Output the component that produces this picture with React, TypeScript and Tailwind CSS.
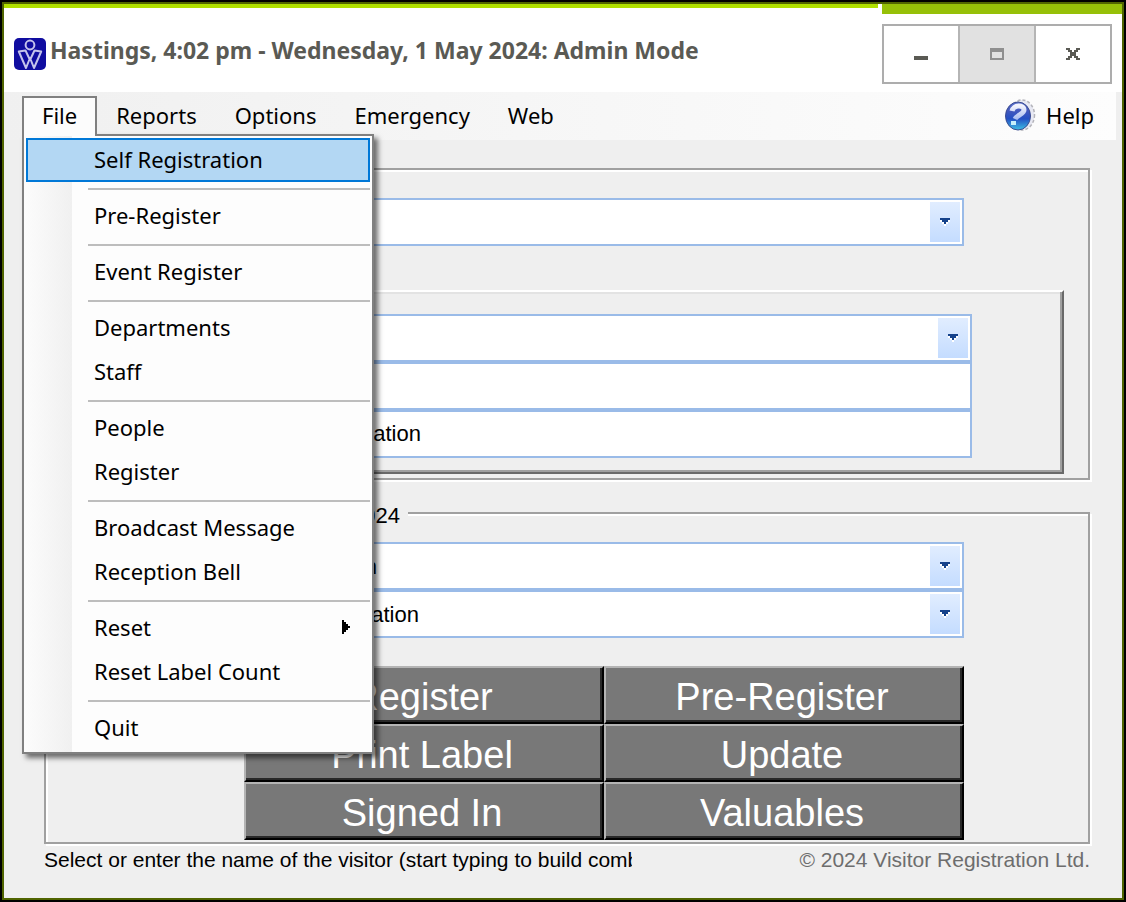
import { useState } from "react";

const MENUS = ["File", "Reports", "Options", "Emergency", "Web"];

const FILE_MENU = [
  ["Self Registration"],
  ["Pre-Register"],
  ["Event Register"],
  ["Departments", "Staff"],
  ["People", "Register"],
  ["Broadcast Message", "Reception Bell"],
  ["Reset", "Reset Label Count"],
  ["Quit"],
];

const ACTIONS = ["Register", "Pre-Register", "Print Label", "Update", "Signed In", "Valuables"];

function AppIcon() {
  return (
    <svg width="32" height="32" viewBox="0 0 32 32" className="shrink-0" aria-hidden="true">
      <rect width="32" height="32" rx="5" fill="#100da0" />
      <g fill="none" stroke="#c4c3ec" strokeWidth="2" strokeLinejoin="round">
        <circle cx="16" cy="7" r="4.4" />
        <path d="M11.5 12.5 4.8 13.5 12 30 16 20l4 10 7.2-16.5-6.7-1L16 22z" />
      </g>
    </svg>
  );
}

function HelpIcon() {
  return (
    <svg width="32" height="32" viewBox="0 0 32 32" className="shrink-0" aria-hidden="true">
      <defs>
        <linearGradient id="ball" x1="0" y1="0" x2="0" y2="1">
          <stop offset="0%" stopColor="#5d74cf" />
          <stop offset="30%" stopColor="#4459bd" />
          <stop offset="60%" stopColor="#2450c4" />
          <stop offset="100%" stopColor="#3cc0e4" />
        </linearGradient>
        <linearGradient id="mark" x1="0" y1="0" x2="0" y2="1">
          <stop offset="0%" stopColor="#f2f3fd" />
          <stop offset="100%" stopColor="#a9bdf0" />
        </linearGradient>
      </defs>
      <ellipse cx="18" cy="16" rx="12.5" ry="15" fill="#e8e9f3" stroke="#b4b4ba" strokeWidth="1.5" strokeDasharray="3 2" />
      <ellipse cx="14" cy="17" rx="12.5" ry="14" fill="url(#ball)" stroke="#3c4c90" />
      <path d="M8 12c1-6 12-7 12-1 0 4-7 5-9 9" fill="none" stroke="url(#mark)" strokeWidth="5" />
      <rect x="7" y="22" width="5" height="4" fill="#c5f0fb" />
    </svg>
  );
}

function Caret() {
  return (
    <svg width="10" height="8" viewBox="0 0 10 8" shapeRendering="crispEdges" aria-hidden="true">
      <path d="M0 2h10v2H8v2H6v2H4V6H2V4H0z" fill="#fff" />
      <path d="M0 0h10v2H8v2H6v2H4V4H2V2H0z" fill="#15428b" />
    </svg>
  );
}

function Combo({ label, value = "" }: { label: string; value?: string }) {
  return (
    <div className="flex h-12 border-2 border-[#9abbe8] bg-white p-0.5">
      <input
        aria-label={label}
        defaultValue={value}
        className="min-w-0 flex-1 bg-transparent pl-3 text-[22px] outline-none"
      />
      <button aria-label={`Open ${label}`} className="flex w-[30px] items-center justify-center bg-linear-to-b from-[#e1edff] to-[#c4dcff]">
        <Caret />
      </button>
    </div>
  );
}

function TextBox({ label, value = "" }: { label: string; value?: string }) {
  return (
    <input
      aria-label={label}
      defaultValue={value}
      className="block h-12 w-full border-2 border-[#9abbe8] bg-white px-3.5 text-[22px] outline-none"
    />
  );
}

function FileMenu() {
  return (
    <div
      role="menu"
      className="absolute top-[42px] left-[18px] z-10 w-[352px] border-2 border-[#808080] bg-[#fdfdfd] bg-linear-to-r from-[#fcfcfc] to-[#f0f0f0] bg-[length:48px_100%] bg-no-repeat p-0.5 shadow-[4px_4px_5px_rgba(0,0,0,0.55)]"
    >
      {FILE_MENU.map((group, i) => (
        <div key={group[0]} role="group">
          {i > 0 && <div className="mt-1.5 mb-1 ml-[62px] h-0.5 bg-[#bdbdbd]" />}
          {group.map((item) => (
            <button
              key={item}
              role="menuitem"
              className={
                item === "Self Registration"
                  ? "flex h-11 w-full items-center justify-between border-2 border-[#0078d7] bg-[#b3d7f3] pr-[18px] pb-0.5 pl-[66px]"
                  : "flex h-11 w-full items-center justify-between border-2 border-transparent pr-[18px] pb-0.5 pl-[66px]"
              }
            >
              {item}
              {item === "Reset" && (
                <svg width="8" height="14" viewBox="0 0 8 14" shapeRendering="crispEdges" aria-hidden="true">
                  <path d="M0 0h2v2h2v2h2v2h2v2H6v2H4v2H2v2H0z" />
                </svg>
              )}
            </button>
          ))}
        </div>
      ))}
    </div>
  );
}

export default function App() {
  const [open, setOpen] = useState(true);

  return (
    <div className="flex min-h-screen flex-col border-2 border-black bg-[#efefef] font-['Liberation_Sans',Arial,sans-serif] text-black">
      <div className="flex flex-1 flex-col border-2 border-[#506400]">
        {/* Title bar */}
        <header className="flex h-[88px] bg-white">
          <div className="mr-1 min-w-0 flex-1">
            <div className="h-1 bg-[#b0e000]" />
            <div className="flex items-center gap-1 pt-[26px] pl-2.5">
              <AppIcon />
              <h1 className="pb-2 font-['Noto_Sans','Open_Sans',sans-serif] text-[23px] leading-8 font-bold whitespace-nowrap text-[#5a5a54]">
                Hastings, 4:02 pm - Wednesday, 1 May 2024: Admin Mode
              </h1>
            </div>
          </div>
          <div className="w-60">
            <div className="h-2.5 bg-[#96c008]" />
            <div className="mt-2.5 flex h-[60px] w-[230px] border-2 border-[#adadad]">
              <button aria-label="Minimize" className="flex flex-1 items-center justify-center pt-2">
                <svg width="14" height="4" aria-hidden="true">
                  <path d="M0 0h14v4H0z" fill="#5a5a54" />
                </svg>
              </button>
              <button
                aria-label="Maximize"
                disabled
                className="flex flex-1 items-center justify-center border-x-2 border-[#b5b5b5] bg-[#e1e1e1]"
              >
                <svg width="14" height="12" shapeRendering="crispEdges" aria-hidden="true">
                  <path d="M0 0h14v12H0zM2 4v6h10V4z" fill="#8f8f8f" fillRule="evenodd" />
                </svg>
              </button>
              <button aria-label="Close" className="flex flex-1 items-center justify-center">
                <svg width="14" height="12" shapeRendering="crispEdges" aria-hidden="true">
                  <path d="M0 0h4v2h2v2h2V2h2V0h4v2h-2v2h-2v4h2v2h2v2h-4v-2H8V8H6v2H4v2H0v-2h2V8h2V4H2V2H0z" fill="#5a5a54" />
                </svg>
              </button>
            </div>
          </div>
        </header>

        {/* Menu bar */}
        <nav className="relative mr-1.5 flex h-12 items-center bg-linear-to-r from-[#f0f0f0] to-[#fdfdfd] pl-[18px] font-['Noto_Sans','Open_Sans',sans-serif] text-[22px]">
          {MENUS.map((name) =>
            name === "File" ? (
              <button
                key={name}
                aria-expanded={open}
                onClick={() => setOpen(!open)}
                className="relative z-20 mt-1 h-10 self-start border-2 border-b-0 border-[#808080] bg-[#fcfcfc] px-[18px] pb-1"
              >
                {name}
              </button>
            ) : (
              <button key={name} className="h-10 px-[19px] pb-0.5">
                {name}
              </button>
            ),
          )}
          <button className="mr-[22px] ml-auto flex items-center gap-2.5 pb-0.5">
            <HelpIcon />
            Help
          </button>
          {open && <FileMenu />}
        </nav>

        {/* Form */}
        <main className="flex flex-1 flex-col px-8 pt-7 pl-10 text-[22px]">
          <fieldset className="border-2 border-[#a0a0a0] px-6 pt-7 pb-1 shadow-[2px_2px_0_#fff,inset_2px_2px_0_#fff]">
            <div className="mr-[100px] ml-[174px]">
              <Combo label="Visitor" />
            </div>
            <div className="mt-11 border-2 border-t-white border-r-[#696969] border-b-[#696969] border-l-white pt-[22px] pb-3.5 shadow-[inset_-2px_-2px_0_#a0a0a0,inset_2px_2px_0_#e3e3e3]">
              <div className="mr-[90px] ml-[174px]">
                <Combo label="Person" />
                <TextBox label="Contact" />
                <TextBox label="Registration" value="Car Registration" />
              </div>
            </div>
          </fieldset>

          <fieldset className="mt-[18px] border-2 border-[#a0a0a0] pb-0.5 shadow-[2px_2px_0_#fff,inset_2px_2px_0_#fff]">
            <legend className="ml-[174px] bg-[#efefef] px-2 pt-1.5 leading-6">Wed, 1 May 2024</legend>
            <div className="mr-[124px] ml-[198px] pt-3.5">
              <Combo label="Host" value="Visit Person" />
              <Combo label="Vehicle" value="Car Registration" />
              <div className="mt-7 grid grid-cols-2">
                {ACTIONS.map((action) => (
                  <button
                    key={action}
                    className="h-[58px] border-2 border-t-[#b4b4b4] border-r-black border-b-black border-l-[#b4b4b4] bg-[#787878] pt-1 pr-1 text-[38px] leading-none text-white shadow-[inset_-2px_-2px_0_#282828]"
                  >
                    {action}
                  </button>
                ))}
              </div>
            </div>
          </fieldset>

          <footer className="flex justify-between pt-0.5 text-[21px] leading-7">
            <p className="w-[588px] overflow-hidden whitespace-nowrap">
              Select or enter the name of the visitor (start typing to build comb
            </p>
            <p className="whitespace-nowrap text-[#6d6d6d]">© 2024 Visitor Registration Ltd.</p>
          </footer>
        </main>
      </div>
    </div>
  );
}
